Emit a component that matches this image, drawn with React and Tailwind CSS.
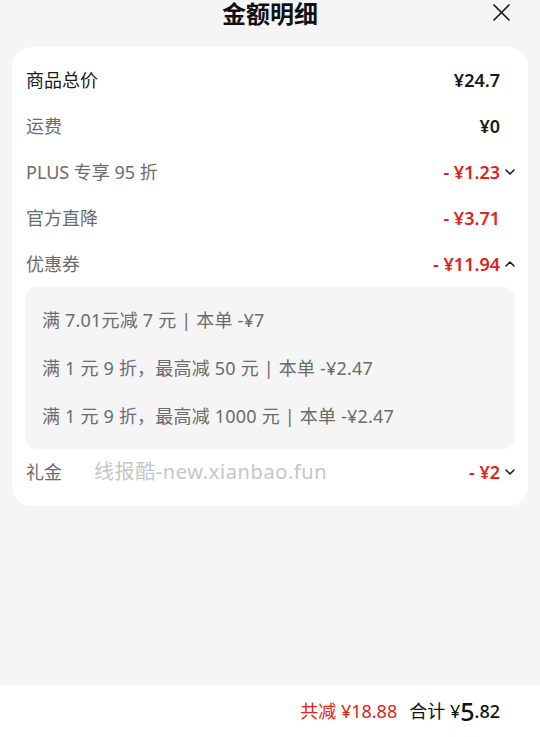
const FONT = { fontFamily: '"Noto Sans", "Noto Sans CJK SC", sans-serif' };

function Chevron({ up }) {
  return (
    <svg width="10" height="6" viewBox="0 0 10 6" className="shrink-0">
      <path
        d={up ? 'M1 5 L5 1 L9 5' : 'M1 1 L5 5 L9 1'}
        fill="none"
        stroke="#111"
        strokeWidth="1.5"
        strokeLinecap="round"
        strokeLinejoin="round"
      />
    </svg>
  );
}

function Row({ label, value, red, dark, arrow, extra }) {
  return (
    <div className="flex h-[46px] items-center pl-[1px]">
      <span className={`text-[18px] ${dark ? 'text-[#1a1a1a]' : 'text-[#6b6b6b]'}`}>{label}</span>
      {extra}
      <div className="ml-auto flex items-center">
        <span className={`text-[18px] font-semibold ${red ? 'text-[#e2231a]' : 'text-[#1a1a1a]'}`}>{value}</span>
        <span className="flex w-[15px] justify-end">{arrow && <Chevron up={arrow === 'up'} />}</span>
      </div>
    </div>
  );
}

export default function App() {
  const coupons = [
    '满 7.01元减 7 元 | 本单 -¥7',
    '满 1 元 9 折，最高减 50 元 | 本单 -¥2.47',
    '满 1 元 9 折，最高减 1000 元 | 本单 -¥2.47',
  ];

  return (
    <div className="flex h-screen flex-col bg-[#f5f5f5]" style={FONT}>
      {/* 标题 */}
      <div className="relative h-[47px] shrink-0">
        <h1 className="pt-[1px] text-center text-[24px] font-semibold leading-[26px] text-[#111]">金额明细</h1>
        <svg className="absolute right-[30px] top-[4px]" width="17" height="17" viewBox="0 0 17 17">
          <path d="M1 1 L16 16 M16 1 L1 16" stroke="#1a1a1a" strokeWidth="1.7" strokeLinecap="round" />
        </svg>
      </div>

      {/* 明细卡片 */}
      <div className="mx-[12px] rounded-[20px] bg-white px-[13px] pb-[11px] pt-[10px]">
        <Row label="商品总价" value="¥24.7" dark />
        <Row label="运费" value="¥0" />
        <Row label="PLUS 专享 95 折" value="- ¥1.23" red arrow="down" />
        <Row label="官方直降" value="- ¥3.71" red />
        <Row label="优惠券" value="- ¥11.94" red arrow="up" />

        <div className="rounded-[12px] bg-[#f5f5f5] py-[9px] pl-[17px]">
          {coupons.map((c) => (
            <div key={c} className="flex h-[48px] items-center whitespace-pre text-[18px] tracking-[0.2px] text-[#6b6b6b]">
              {c}
            </div>
          ))}
        </div>

        <Row
          label="礼金"
          value="- ¥2"
          red
          arrow="down"
          extra={<span className="ml-[32px] text-[20px] tracking-[0.6px] text-[#c6c6c6]">线报酷-new.xianbao.fun</span>}
        />
      </div>

      <div className="flex-1" />

      {/* 底部合计 */}
      <div className="flex h-[52px] shrink-0 items-center justify-end bg-white pr-[40px]">
        <span className="text-[18px] text-[#e2231a]">共减 ¥18.88</span>
        <span className="ml-[12px] text-[18px] text-[#111]">合计 ¥</span>
        <span className="text-[25px] font-medium leading-none text-[#111]">5</span>
        <span className="text-[18px] font-medium text-[#111]">.82</span>
      </div>
    </div>
  );
}
